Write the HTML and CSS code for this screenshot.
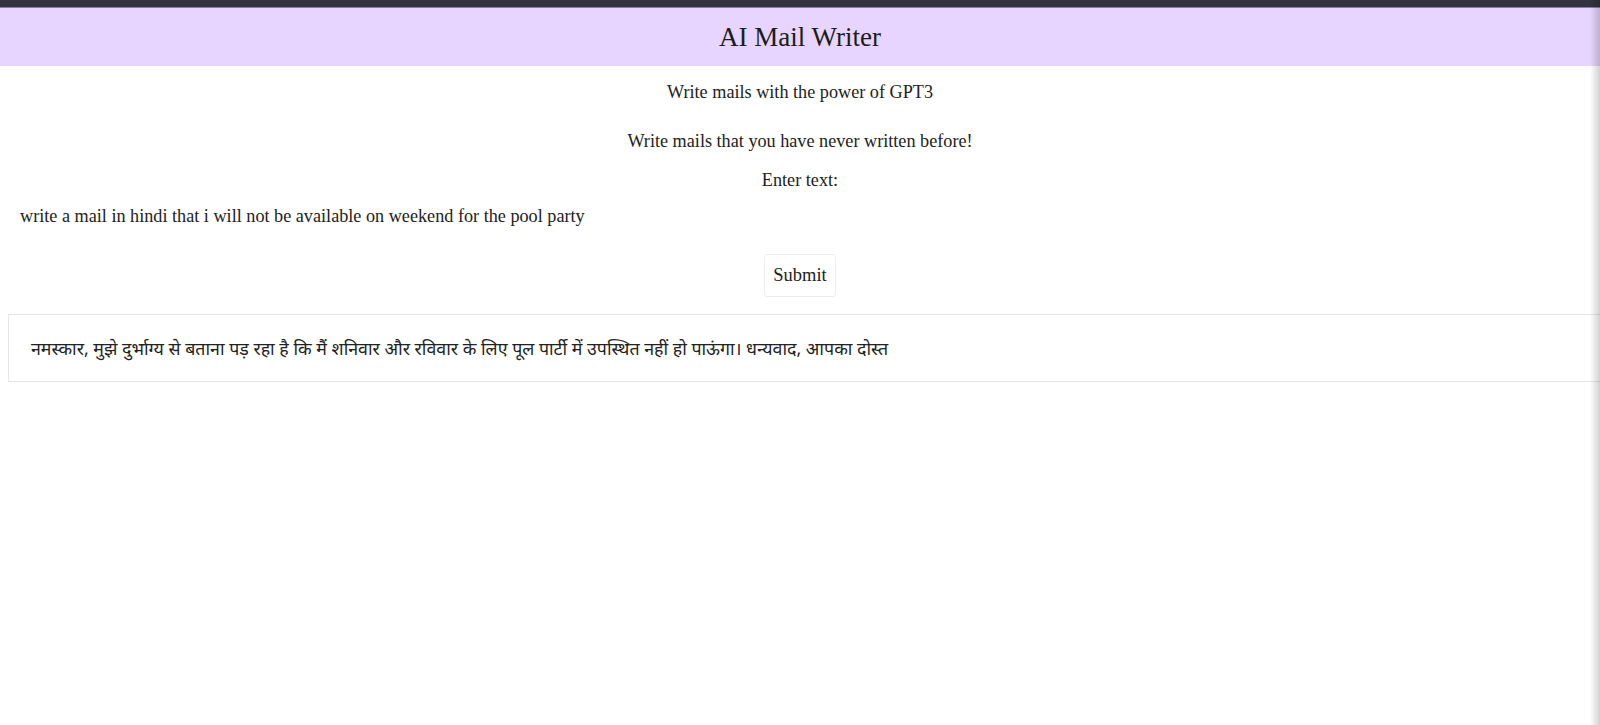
FILE: index.html
```html
<!DOCTYPE html>
<html lang="en">
<head>
<meta charset="utf-8">
<title>AI Mail Writer</title>
<link rel="stylesheet" href="styles.css">
</head>
<body>
<div class="topbar"></div>
<header class="header"><h1 class="title">AI Mail Writer</h1></header>
<main class="main">
  <p class="sub">Write mails with the power of GPT3</p>
  <p class="sub sub2">Write mails that you have never written before!</p>
  <label class="label" for="prompt">Enter text:</label>
  <input class="prompt" id="prompt" type="text" value="write a mail in hindi that i will not be available on weekend for the pool party">
  <div class="actions"><button class="submit" type="button">Submit</button></div>
  <div class="output">नमस्कार, मुझे दुर्भाग्य से बताना पड़ रहा है कि मैं शनिवार और रविवार के लिए पूल पार्टी में उपस्थित नहीं हो पाऊंगा। धन्यवाद, आपका दोस्त</div>
</main>
<div class="edge"></div>
</body>
</html>
```
FILE: styles.css
```css
html, body {
  margin: 0;
  padding: 0;
  background: #ffffff;
  overflow: hidden;
}
body {
  font-family: "Liberation Serif", serif;
  color: #222;
  font-size: 18.2px;
}
.topbar {
  height: 7px;
  background: #33343f;
  border-bottom: 1px solid #8a7ea3;
}
.header {
  height: 58px;
  background: #e8d5ff;
  display: flex;
  align-items: center;
  justify-content: center;
}
.title {
  margin: 0;
  font-weight: normal;
  font-size: 27px;
  color: #1c1c1c;
}
.main {
  display: flex;
  flex-direction: column;
  align-items: center;
}
.sub {
  margin: 16px 0 0;
  line-height: 20px;
}
.sub2 {
  margin-top: 29px;
}
.label {
  margin-top: 19px;
  line-height: 20px;
}
.prompt {
  align-self: stretch;
  margin: 16px 8px 0;
  padding: 0 12px;
  height: 20px;
  border: none;
  outline: none;
  font-family: "Liberation Serif", serif;
  font-size: 18.2px;
  color: #222;
  background: transparent;
}
.actions {
  margin-top: 28px;
}
.submit {
  width: 72px;
  height: 43px;
  border: 1px solid #ececec;
  border-radius: 3px;
  background: #fff;
  font-family: "Liberation Serif", serif;
  font-size: 18.5px;
  color: #222;
}
.output {
  align-self: stretch;
  margin: 17px 0 0 8px;
  width: 1610px;
  box-sizing: border-box;
  height: 68px;
  border: 1px solid #e6e6e6;
  padding: 0 22px;
  display: flex;
  align-items: center;
  font-family: "Noto Sans", "Noto Sans Devanagari", "Lohit Devanagari", sans-serif;
  font-size: 17.8px;
  color: #222;
}
.edge {
  position: fixed;
  top: 0;
  right: 0;
  width: 10px;
  height: 100%;
  background: linear-gradient(to right, rgba(0,0,0,0), rgba(0,0,0,0.18));
  pointer-events: none;
}
```
